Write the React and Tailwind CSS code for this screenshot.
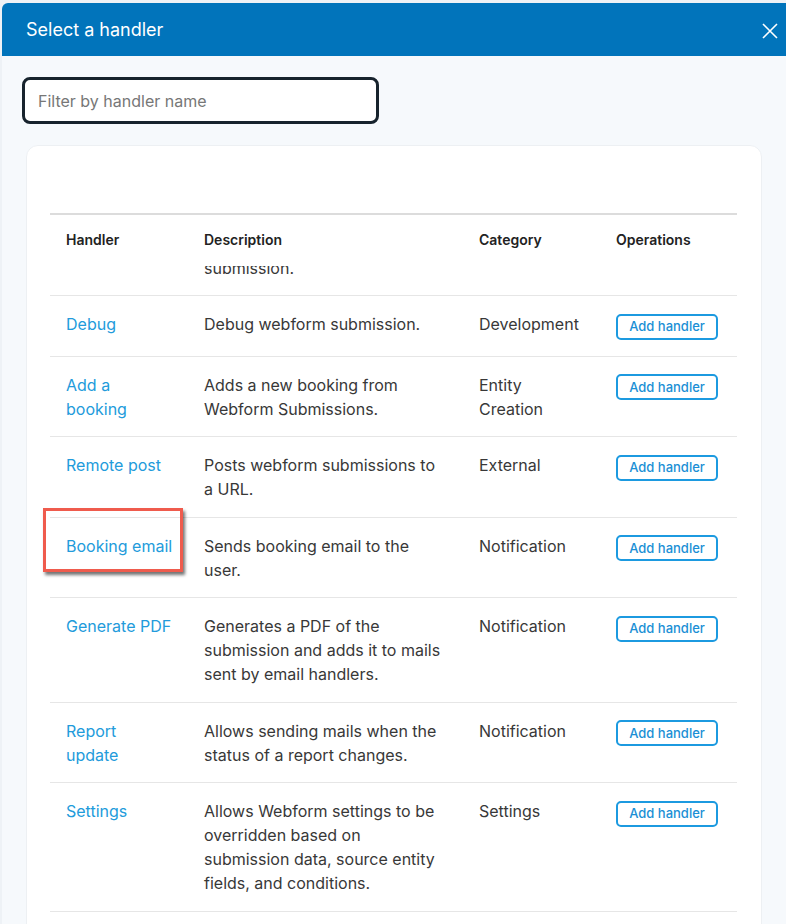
import React from "react";

const rows = [
    { name: ["Debug"], desc: "Debug webform submission.", cat: "Development" },
    { name: ["Add a", "booking"], desc: "Adds a new booking from Webform Submissions.", cat: "Entity Creation" },
    { name: ["Remote post"], desc: "Posts webform submissions to a URL.", cat: "External" },
    { name: ["Booking email"], desc: "Sends booking email to the user.", cat: "Notification", marked: true },
    { name: ["Generate PDF"], desc: "Generates a PDF of the submission and adds it to mails sent by email handlers.", cat: "Notification" },
    { name: ["Report", "update"], desc: "Allows sending mails when the status of a report changes.", cat: "Notification" },
    { name: ["Settings"], desc: "Allows Webform settings to be overridden based on submission data, source entity fields, and conditions.", cat: "Settings" },
];

const grid = "grid grid-cols-[138px_275px_137px_137px]";

function App() {
    return (
        <div className="min-h-screen w-full overflow-hidden bg-[#eef2f6] pt-[3px] pl-[2px]" style={{ fontFamily: "Inter, 'Noto Sans', sans-serif" }}>
            <div className="w-[820px] rounded-tl-md overflow-hidden bg-[#f6f9fc] min-h-[921px]">
                {/* Header */}
                <div className="h-[53px] bg-[#0174bb] flex items-center pl-6 relative">
                    <h1 className="text-white text-[18px] leading-none">Select a handler</h1>
                    <button className="absolute left-[759px] top-[19px] w-[18px] h-[18px] flex items-center justify-center">
                        <svg width="16" height="16" viewBox="0 0 16 16" fill="none" stroke="white" strokeWidth="1.6">
                            <path d="M1 1 L15 15 M15 1 L1 15" />
                        </svg>
                    </button>
                </div>

                {/* Filter */}
                <div className="pt-[21px] pl-5">
                    <input
                        type="text"
                        placeholder="Filter by handler name"
                        className="w-[357px] h-[47px] rounded-lg border-[3px] border-[#17232d] bg-white px-[13px] text-[16px] text-[#333] placeholder-[#777] outline-none"
                    />
                </div>

                {/* Card */}
                <div className="mt-[21px] ml-6 w-[736px] bg-white rounded-xl border border-[#edf0f3] pt-[67px] pl-[23px] pb-6">
                    <div className="w-[687px] border-t-2 border-[#dcdcdc]">
                        <div className={`${grid} text-[14px] font-semibold text-[#222] leading-5`}>
                            <div className="px-4 pt-[15px] pb-4">Handler</div>
                            <div className="px-4 pt-[15px] pb-4">Description</div>
                            <div className="px-4 pt-[15px] pb-4">Category</div>
                            <div className="px-4 pt-[15px] pb-4">Operations</div>
                        </div>

                        {/* row scrolled under the sticky header */}
                        <div className="h-[30px] overflow-hidden border-b border-[#e6e6e6]">
                            <div className={`${grid} -mt-[10px] text-[16px] leading-6 text-[#383838]`}>
                                <div />
                                <div className="px-4">submission.</div>
                            </div>
                        </div>

                        {rows.map((r) => (
                            <div key={r.name.join(" ")} className={`${grid} border-b border-[#e6e6e6] text-[16px] leading-6 text-[#383838]`}>
                                <div className="px-4 pt-4 pb-[15.5px] relative whitespace-nowrap">
                                    <a href="#" className="text-[#229bdb]">
                                        {r.name.map((part, i) => (
                                            <span key={i} className="block">{part}</span>
                                        ))}
                                    </a>
                                    {r.marked && (
                                        <div className="absolute -left-[7px] -top-[10px] w-[140px] h-[64px] border-[3px] border-[#ef5b4d] shadow-[2px_3px_3px_rgba(0,0,0,0.55)]" />
                                    )}
                                </div>
                                <div className="px-4 pt-4 pb-[15.5px]">{r.desc}</div>
                                <div className="px-4 pt-4 pb-[15.5px]">{r.cat}</div>
                                <div className="px-4 pt-[17px] pb-4">
                                    <button className="w-[102px] h-[26px] rounded-[5px] border-2 border-[#1c9ae0] text-[13px] font-medium text-[#1b8fd5] leading-none">
                                        Add handler
                                    </button>
                                </div>
                            </div>
                        ))}
                    </div>
                </div>
            </div>
        </div>
    );
}

export default App;
